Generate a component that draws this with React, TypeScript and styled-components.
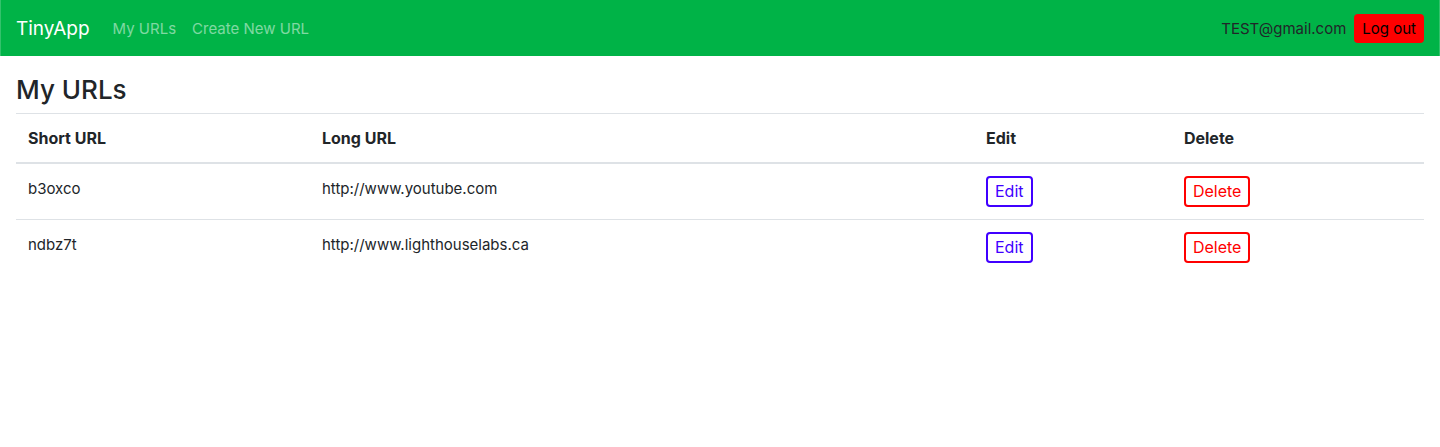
import React from 'react';
import styled, { createGlobalStyle } from 'styled-components';

const GlobalStyle = createGlobalStyle`
  *, *::before, *::after { box-sizing: border-box; }
  body {
    margin: 0;
    background: #fff;
    color: #212529;
    font-family: Inter, "Liberation Sans", sans-serif;
    font-size: 15px;
    line-height: 25px;
  }
`;

const Navbar = styled.nav`
  display: flex;
  align-items: center;
  min-height: 56px;
  padding: 8px 15px;
  border: solid #33c26c;
  border-width: 0 1px;
  background: #00b347;
`;

const Brand = styled.a`
  margin-right: 15px;
  color: #fff;
  font-size: 19px;
  line-height: 31px;
  text-decoration: none;
`;

const NavLink = styled.a`
  padding: 0 8px;
  color: rgba(255, 255, 255, 0.5);
  text-decoration: none;
`;

const Account = styled.div`
  display: flex;
  align-items: center;
  gap: 8px;
  margin-left: auto;
`;

const Button = styled.button`
  display: block;
  border-radius: 4px;
  font-family: inherit;
  font-size: 16px;
  line-height: 23px;
  cursor: pointer;
`;

const LogoutButton = styled(Button)`
  padding: 3px 8px;
  border: 0;
  background: #ff0000;
  color: #000;
  font-size: 15px;
`;

const OutlineButton = styled(Button)<{ $color: string }>`
  padding: 2px 7px;
  border: 2px solid ${(p) => p.$color};
  background: #fff;
  color: ${(p) => p.$color};
`;

const Main = styled.main`
  padding: 16px;
`;

const Title = styled.h3`
  margin: 0 0 5px;
  font-size: 26px;
  font-weight: 500;
  line-height: 36px;
`;

const Table = styled.table`
  width: 100%;
  border-collapse: collapse;
  table-layout: fixed;
`;

const HeadCell = styled.th<{ $width?: string }>`
  width: ${(p) => p.$width ?? 'auto'};
  padding: 12px;
  border-top: 1px solid #dee2e6;
  border-bottom: 2px solid #dee2e6;
  font-size: 16px;
  font-weight: 700;
  line-height: 24px;
  text-align: left;
`;

const Cell = styled.td`
  padding: 12px;
  border-top: 1px solid #dee2e6;
  vertical-align: top;
`;

const urls = [
  { id: 'b3oxco', longUrl: 'http://www.youtube.com' },
  { id: 'ndbz7t', longUrl: 'http://www.lighthouselabs.ca' },
];

export default function App() {
  return (
    <>
      <GlobalStyle />
      <Navbar>
        <Brand href="#">TinyApp</Brand>
        <NavLink href="#urls">My URLs</NavLink>
        <NavLink href="#new">Create New URL</NavLink>
        <Account>
          <span>TEST@gmail.com</span>
          <LogoutButton type="button">Log out</LogoutButton>
        </Account>
      </Navbar>
      <Main>
        <Title>My URLs</Title>
        <Table>
          <thead>
            <tr>
              <HeadCell scope="col" $width="20.88%">Short URL</HeadCell>
              <HeadCell scope="col" $width="47.16%">Long URL</HeadCell>
              <HeadCell scope="col" $width="14.06%">Edit</HeadCell>
              <HeadCell scope="col">Delete</HeadCell>
            </tr>
          </thead>
          <tbody>
            {urls.map((url) => (
              <tr key={url.id}>
                <Cell>{url.id}</Cell>
                <Cell>{url.longUrl}</Cell>
                <Cell><OutlineButton type="button" $color="#4000ff">Edit</OutlineButton></Cell>
                <Cell><OutlineButton type="button" $color="#ff0000">Delete</OutlineButton></Cell>
              </tr>
            ))}
          </tbody>
        </Table>
      </Main>
    </>
  );
}
